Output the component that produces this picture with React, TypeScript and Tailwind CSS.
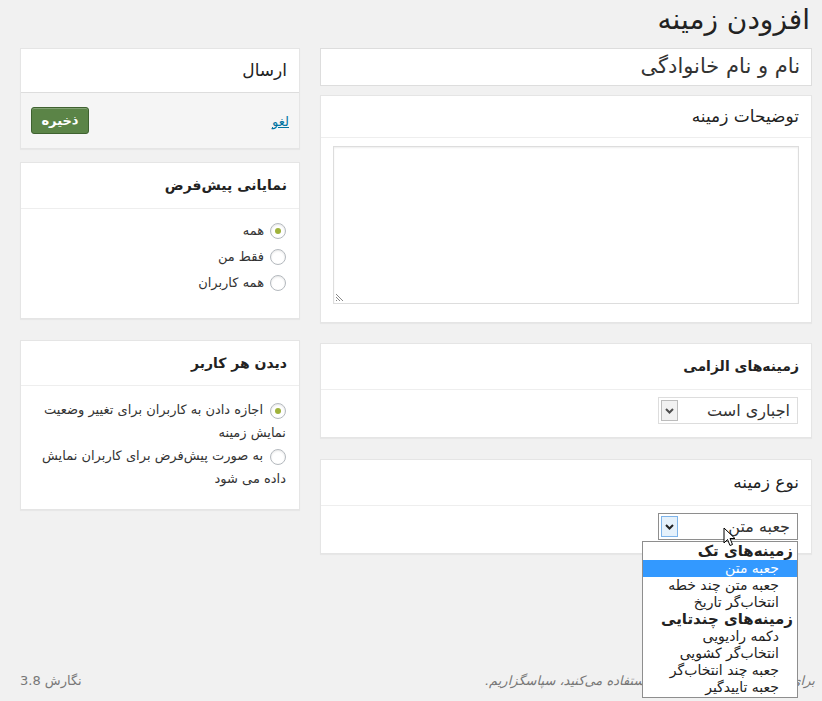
import React from 'react';

const fa = { fontFamily: '"DejaVu Sans", "Liberation Sans", sans-serif' };

function Box({ title, bold, head = 'h-[43px]', children, className = '' }: { title: string; bold?: boolean; head?: string; children: React.ReactNode; className?: string }) {
  return (
    <div className={`bg-white border border-[#e5e5e5] shadow-[0_1px_1px_rgba(0,0,0,0.04)] ${className}`}>
      <h3 className={`${head} flex items-center px-[12px] border-b border-[#eeeeee] text-[#222] ${bold ? 'font-semibold text-[14px]' : 'font-normal text-[17px]'}`}>
        {title}
      </h3>
      {children}
    </div>
  );
}

function Radio({ checked }: { checked?: boolean }) {
  return (
    <span className="inline-flex w-[16px] h-[16px] rounded-full border border-[#b4b9be] bg-white shadow-[inset_0_1px_2px_rgba(0,0,0,0.1)] items-center justify-center align-middle shrink-0">
      {checked && <span className="w-[6px] h-[6px] rounded-full bg-[#9fb23b]" />}
    </span>
  );
}

function Chevron() {
  return (
    <svg width="9" height="6" viewBox="0 0 9 6">
      <path d="M1 1 L4.5 4.5 L8 1" fill="none" stroke="#222" strokeWidth="2" />
    </svg>
  );
}

function Select({ value, open }: { value: string; open?: boolean }) {
  return (
    <div className={`relative w-[140px] h-[27px] bg-white border flex items-center justify-between pr-[7px] pl-[2px] ${open ? 'border-[#8e8e8e]' : 'border-[#dddddd]'}`}>
      <span className="text-[16px] leading-[20px] text-[#333]">{value}</span>
      <span className={`w-[17px] h-[21px] flex items-center justify-center border ${open ? 'bg-[#e5f1fb] border-[#7eb4ea]' : 'bg-[#eeeeee] border-[#acacac] opacity-80'}`}>
        <Chevron />
      </span>
      {open && (
        <>
          <div className="absolute top-[27px] right-[-1px] w-[156px] bg-white border border-[#8e8e8e] z-10 pt-[1px] pb-[1px] text-[14px] leading-[17px] text-[#222]">
            <div className="pr-[4px] font-bold text-[15px]">زمینه‌های تک</div>
            <div className="pr-[18px] bg-[#3399ff] text-white">جعبه متن</div>
            <div className="pr-[18px]">جعبه متن چند خطه</div>
            <div className="pr-[18px]">انتخاب‌گر تاریخ</div>
            <div className="pr-[4px] font-bold text-[15px]">زمینه‌های چندتایی</div>
            <div className="pr-[18px]">دکمه رادیویی</div>
            <div className="pr-[18px]">انتخاب‌گر کشویی</div>
            <div className="pr-[18px]">جعبه چند انتخاب‌گر</div>
            <div className="pr-[18px]">جعبه تاییدگیر</div>
          </div>
          <svg className="absolute top-[13px] left-[64px] z-20" width="14" height="21" viewBox="0 0 14 21">
            <path d="M1 1 L1 16 L4.5 12.5 L7 18.5 L9.5 17.5 L7 11.5 L12 11.5 Z" fill="#fff" stroke="#000" strokeWidth="1" strokeLinejoin="round" />
          </svg>
        </>
      )}
    </div>
  );
}

export default function App() {
  return (
    <div dir="rtl" style={fa} className="min-h-[701px] bg-[#f1f1f1] flex flex-col text-[#333]">
      <div className="pr-[10px] pl-[20px] flex-1">
        <h2 className="text-[28px] leading-[34px] pt-[3px] pb-[11px] pr-[2px] text-[#222]">افزودن زمینه</h2>
        <div className="flex gap-[20px] items-start">
          {/* right column */}
          <div className="w-[492px] shrink-0 flex flex-col">
            <div className="h-[38px] bg-white border border-[#dddddd] flex items-center px-[11px] text-[21px] text-[#333]">
              نام و نام خانوادگی
            </div>
            <Box title="توضیحات زمینه" head="h-[42px]" className="mt-[9px]">
              <div className="pt-[8px] pb-[18px] px-[12px]">
                <div className="relative h-[158px] border border-[#dddddd] bg-white shadow-[inset_0_1px_2px_rgba(0,0,0,0.07)]">
                  <svg className="absolute bottom-[1px] left-[1px]" width="9" height="9" viewBox="0 0 9 9">
                    <path d="M1 1 L8 8 M1 4 L5 8 M1 7 L2 8" stroke="#888" strokeWidth="1" />
                  </svg>
                </div>
              </div>
            </Box>
            <Box title="زمینه‌های الزامی" bold head="h-[46px]" className="mt-[20px]">
              <div className="px-[13px] pt-[7px] pb-[13px]">
                <Select value="اجباری است" />
              </div>
            </Box>
            <Box title="نوع زمینه" head="h-[46px]" className="mt-[21px]">
              <div className="px-[13px] pt-[7px] pb-[13px]">
                <Select value="جعبه متن" open />
              </div>
            </Box>
          </div>
          {/* left column */}
          <div className="w-[280px] shrink-0 flex flex-col">
            <div className="bg-white border border-[#e5e5e5] shadow-[0_1px_1px_rgba(0,0,0,0.04)]">
              <h3 className="h-[43px] flex items-center px-[12px] text-[17px] font-normal text-[#222]">ارسال</h3>
              <div className="bg-[#f5f5f5] border-t border-[#dddddd] h-[56px] flex items-center justify-between px-[10px]">
                <a className="text-[13px] text-[#0074a2] underline mt-[2px]" href="#">لغو</a>
                <button className="w-[58px] h-[27px] rounded-[3px] bg-[#5b8447] border border-[#3f6230] text-white text-[13px] font-bold shadow-[inset_0_1px_0_rgba(255,255,255,0.25)]">
                  ذخیره
                </button>
              </div>
            </div>
            <Box title="نمایانی پیش‌فرض" bold head="h-[46px]" className="mt-[13px]">
              <div className="px-[13px] pt-[14px] pb-[27px] flex flex-col gap-[10px] text-[13px]">
                <label className="flex items-center gap-[6px] h-[16px]"><Radio checked />همه</label>
                <label className="flex items-center gap-[6px] h-[16px]"><Radio />فقط من</label>
                <label className="flex items-center gap-[6px] h-[16px]"><Radio />همه کاربران</label>
              </div>
            </Box>
            <Box title="دیدن هر کاربر" bold head="h-[45px]" className="mt-[21px]">
              <div className="px-[13px] pt-[12px] pb-[19px] text-[13px] leading-[23px]">
                <div><Radio checked /><span className="mr-[7px]">اجازه دادن به کاربران برای تغییر وضعیت</span><br />نمایش زمینه</div>
                <div><Radio /><span className="mr-[7px]">به صورت پیش‌فرض برای کاربران نمایش</span><br />داده می شود</div>
              </div>
            </Box>
          </div>
        </div>
      </div>
      <div className="h-[40px] flex items-center justify-between pr-[7px] pl-[20px] text-[13px] text-[#777]">
        <span className="italic">برای ساخت سایت از وردپرس استفاده می‌کنید، سپاسگزاریم.</span>
        <span>نگارش 3.8</span>
      </div>
    </div>
  );
}
